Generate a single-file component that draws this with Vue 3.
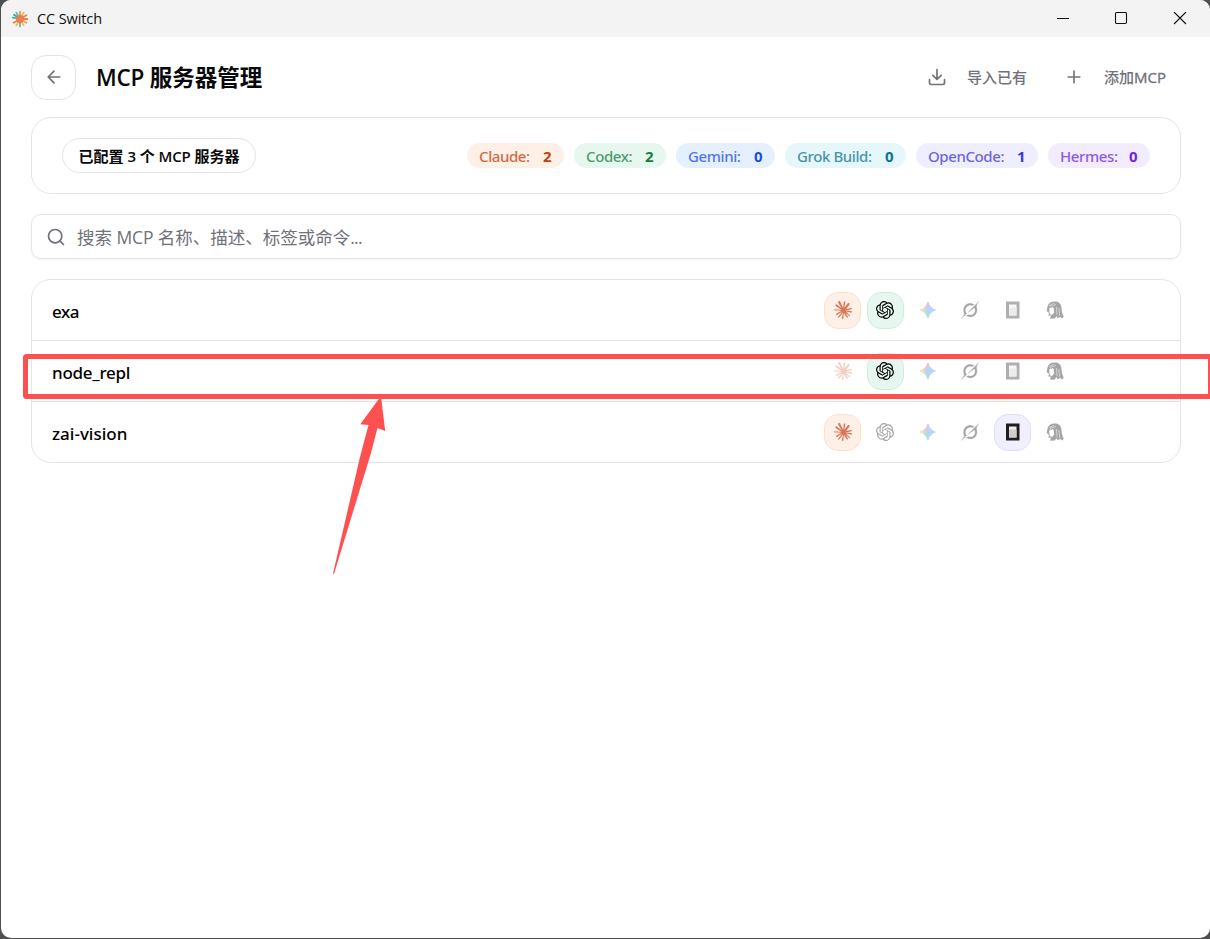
<script setup>
const counts = [
  { id: 'claude', label: 'Claude:', n: 2 },
  { id: 'codex', label: 'Codex:', n: 2 },
  { id: 'gemini', label: 'Gemini:', n: 0 },
  { id: 'grok', label: 'Grok Build:', n: 0 },
  { id: 'opencode', label: 'OpenCode:', n: 1 },
  { id: 'hermes', label: 'Hermes:', n: 0 },
]
const apps = ['claude', 'codex', 'gemini', 'grok', 'opencode', 'hermes']
const servers = [
  { name: 'exa', cls: 'n1', on: ['claude', 'codex'] },
  { name: 'node_repl', cls: 'n2', on: ['codex'] },
  { name: 'zai-vision', cls: 'n3', on: ['claude', 'opencode'] },
]
const rays = [
  ['#4fb3b0', 190], ['#3fa7a5', 215], ['#57b9b4', 240], ['#e8a04c', 270], ['#f0b65a', 300],
  ['#e5824e', 330], ['#e5824e', 0], ['#e9a04c', 30], ['#f0c05a', 60], ['#5fb8b0', 90],
  ['#f0b65a', 120], ['#e5824e', 150],
]
</script>

<template>
  <div class="desktop">
    <div class="window">
      <header class="titlebar">
        <svg class="logo" viewBox="-10 -10 20 20">
          <line v-for="r in rays" :key="r[1]" x1="2" y1="0" x2="7.4" y2="0" :stroke="r[0]" stroke-width="1.8" stroke-linecap="round" :transform="`rotate(${r[1]})`" />
          <circle r="3.9" fill="#e87f4c" />
        </svg>
        <span class="app-name">CC Switch</span>
        <div class="controls">
          <svg viewBox="0 0 14 14"><path d="M1 6.5h12" /></svg>
          <svg viewBox="0 0 14 14"><rect x="1.5" y=".5" width="11" height="11" rx="1.2" /></svg>
          <svg viewBox="0 0 14 14"><path d="M1 0l12 12M13 0L1 12" /></svg>
        </div>
      </header>

      <main class="content">
        <div class="head">
          <button class="back">
            <svg class="line" viewBox="0 0 24 24"><path d="m12 19-7-7 7-7M19 12H5" /></svg>
          </button>
          <h1><span class="lat">MCP</span> 服务器管理</h1>
          <div class="actions">
            <svg class="line" viewBox="0 0 24 24"><path d="M12 15V3M21 15v4a2 2 0 0 1-2 2H5a2 2 0 0 1-2-2v-4M7 10l5 5 5-5" /></svg>
            <span class="act import">导入已有</span>
            <svg class="line" viewBox="0 0 24 24"><path d="M5 12h14M12 5v14" /></svg>
            <span class="act">添加<span class="lat">MCP</span></span>
          </div>
        </div>

        <section class="summary">
          <div class="total">已配置 <span class="lat">3</span> 个 <span class="lat">MCP</span> 服务器</div>
          <div class="badges">
            <div v-for="c in counts" :key="c.id" class="badge" :class="'b-' + c.id">
              <span class="label">{{ c.label }}</span><b>{{ c.n }}</b>
            </div>
          </div>
        </section>

        <div class="search">
          <svg class="line" viewBox="0 0 24 24"><circle cx="11" cy="11" r="8" /><path d="m21 21-4.3-4.3" /></svg>
          <span>搜索 <span class="lat">MCP</span> 名称、描述、标签或命令<span class="dots">...</span></span>
        </div>

        <section class="list">
          <div v-for="s in servers" :key="s.name" class="row">
            <span class="name" :class="s.cls">{{ s.name }}</span>
            <div class="apps">
              <div v-for="a in apps" :key="a" class="app" :class="['a-' + a, { on: s.on.includes(a) }]">
                <svg v-if="a === 'claude'" viewBox="0 0 24 24" fill="#d97757"><path d="M4.709 15.955l4.72-2.647.08-.23-.08-.128H9.2l-.79-.048-2.698-.073-2.339-.097-2.266-.122-.571-.121L0 11.784l.055-.352.48-.321.686.06 1.52.103 2.278.158 1.652.097 2.449.255h.389l.055-.157-.134-.098-.103-.097-2.358-1.596-2.552-1.688-1.336-.972-.724-.491-.364-.462-.158-1.008.656-.722.881.06.225.061.893.686 1.908 1.476 2.491 1.833.365.304.145-.103.019-.073-.164-.274-1.355-2.446-1.446-2.49-.644-1.032-.17-.619a2.97 2.97 0 01-.104-.729L6.283.134 6.696 0l.996.134.42.364.62 1.414 1.002 2.229 1.555 3.03.456.898.243.832.091.255h.158V9.01l.128-1.706.237-2.095.23-2.695.08-.76.376-.91.747-.492.584.28.48.685-.067.444-.286 1.851-.559 2.903-.364 1.942h.212l.243-.242.985-1.306 1.652-2.064.73-.82.85-.904.547-.431h1.033l.76 1.129-.34 1.166-1.064 1.347-.881 1.142-1.264 1.7-.79 1.36.073.11.188-.02 2.856-.606 1.543-.28 1.841-.315.833.388.091.395-.328.807-1.969.486-2.309.462-3.439.813-.042.03.049.061 1.549.146.662.036h1.622l3.02.225.79.522.474.638-.079.485-1.215.62-1.64-.389-3.829-.91-1.312-.329h-.182v.11l1.093 1.068 2.006 1.81 2.509 2.33.127.578-.322.455-.34-.049-2.205-1.657-.851-.747-1.926-1.62h-.128v.17l.444.649 2.345 3.521.122 1.08-.17.353-.608.213-.668-.122-1.374-1.925-1.415-2.167-1.143-1.943-.14.08-.674 7.254-.316.37-.729.28-.607-.461-.322-.747.322-1.476.389-1.924.315-1.53.286-1.9.17-.632-.012-.042-.14.018-1.434 1.967-2.18 2.945-1.726 1.845-.414.164-.717-.37.067-.662.401-.589 2.388-3.036 1.44-1.882.93-1.086-.006-.158h-.055L4.132 18.56l-1.13.146-.487-.456.061-.746.231-.243 1.908-1.312-.006.006z" /></svg>
                <svg v-else-if="a === 'codex'" viewBox="0 0 24 24"><path d="M22.2819 9.8211a5.9847 5.9847 0 0 0-.5157-4.9108 6.0462 6.0462 0 0 0-6.5098-2.9A6.0651 6.0651 0 0 0 4.9807 4.1818a5.9847 5.9847 0 0 0-3.9977 2.9 6.0462 6.0462 0 0 0 .7427 7.0966 5.98 5.98 0 0 0 .511 4.9107 6.051 6.051 0 0 0 6.5146 2.9001A5.9847 5.9847 0 0 0 13.2599 24a6.0557 6.0557 0 0 0 5.7718-4.2058 5.9894 5.9894 0 0 0 3.9977-2.9001 6.0557 6.0557 0 0 0-.7475-7.073zm-9.022 12.6081a4.4755 4.4755 0 0 1-2.8764-1.0408l.1419-.0804 4.7783-2.7582a.7948.7948 0 0 0 .3927-.6813v-6.7369l2.02 1.1686a.071.071 0 0 1 .038.052v5.5826a4.504 4.504 0 0 1-4.4945 4.4944zm-9.6607-4.1254a4.4708 4.4708 0 0 1-.5346-3.0137l.142.0852 4.783 2.7582a.7712.7712 0 0 0 .7806 0l5.8428-3.3685v2.3324a.0804.0804 0 0 1-.0332.0615L9.74 19.9502a4.4992 4.4992 0 0 1-6.1408-1.6464zM2.3408 7.8956a4.485 4.485 0 0 1 2.3655-1.9728V11.6a.7664.7664 0 0 0 .3879.6765l5.8144 3.3543-2.0201 1.1685a.0757.0757 0 0 1-.071 0l-4.8303-2.7865A4.504 4.504 0 0 1 2.3408 7.872zm16.5963 3.8558L13.1038 8.364 15.1192 7.2a.0757.0757 0 0 1 .071 0l4.8303 2.7913a4.4944 4.4944 0 0 1-.6765 8.1042v-5.6772a.79.79 0 0 0-.407-.667zm2.0107-3.0231l-.142-.0852-4.7735-2.7818a.7759.7759 0 0 0-.7854 0L9.409 9.2297V6.8974a.0662.0662 0 0 1 .0284-.0615l4.8303-2.7866a4.4992 4.4992 0 0 1 6.6802 4.66zM8.3065 12.863l-2.02-1.1638a.0804.0804 0 0 1-.038-.0567V6.0742a4.4992 4.4992 0 0 1 7.3757-3.4537l-.142.0805L8.704 5.459a.7948.7948 0 0 0-.3927.6813zm1.0976-2.3654l2.602-1.4998 2.6069 1.4998v2.9994l-2.5974 1.4997-2.6067-1.4997Z" /></svg>
                <svg v-else-if="a === 'gemini'" viewBox="0 0 24 24">
                  <defs>
                    <linearGradient :id="s.cls + 'g1'" x1="7" y1="15.5" x2="11" y2="12" gradientUnits="userSpaceOnUse"><stop stop-color="#08B962" /><stop offset="1" stop-color="#08B962" stop-opacity="0" /></linearGradient>
                    <linearGradient :id="s.cls + 'g2'" x1="8" y1="5.5" x2="11.5" y2="11" gradientUnits="userSpaceOnUse"><stop stop-color="#F94543" /><stop offset="1" stop-color="#F94543" stop-opacity="0" /></linearGradient>
                    <linearGradient :id="s.cls + 'g3'" x1="3.5" y1="13.5" x2="17.5" y2="12" gradientUnits="userSpaceOnUse"><stop stop-color="#FABC12" /><stop offset=".46" stop-color="#FABC12" stop-opacity="0" /></linearGradient>
                  </defs>
                  <path v-for="f in ['#3186FF', `url(#${s.cls}g1)`, `url(#${s.cls}g2)`, `url(#${s.cls}g3)`]" :key="f" :fill="f" d="M20.616 10.835a14.147 14.147 0 01-4.45-3.001 14.111 14.111 0 01-3.678-6.452.503.503 0 00-.975 0 14.134 14.134 0 01-3.679 6.452 14.155 14.155 0 01-4.45 3.001c-.65.28-1.318.505-2.002.678a.502.502 0 000 .975c.684.172 1.35.397 2.002.677a14.147 14.147 0 014.45 3.001 14.112 14.112 0 013.679 6.453.502.502 0 00.975 0c.172-.685.397-1.351.677-2.003a14.145 14.145 0 013.001-4.45 14.113 14.113 0 016.453-3.678.503.503 0 000-.975 13.245 13.245 0 01-2.003-.678z" />
                </svg>
                <svg v-else-if="a === 'grok'" viewBox="0 0 24 24"><path stroke="#000" stroke-width=".4" d="M9.27 15.29l7.978-5.897c.391-.29.95-.177 1.137.272.98 2.369.542 5.215-1.41 7.169-1.951 1.954-4.667 2.382-7.149 1.406l-2.711 1.257c3.889 2.661 8.611 2.003 11.562-.953 2.341-2.344 3.066-5.539 2.388-8.42l.006.007c-.983-4.232.242-5.924 2.75-9.383.06-.082.12-.164.179-.248l-3.301 3.305v-.01L9.267 15.292M7.623 16.723c-2.792-2.67-2.31-6.801.071-9.184 1.761-1.763 4.647-2.483 7.166-1.425l2.705-1.25a7.808 7.808 0 00-1.829-1A8.975 8.975 0 005.984 5.83c-2.533 2.536-3.33 6.436-1.962 9.764 1.022 2.487-.653 4.246-2.34 6.022-.599.63-1.199 1.259-1.682 1.925l7.62-6.815" /></svg>
                <svg v-else-if="a === 'opencode'" viewBox="0 0 18 18"><path fill="#211e1e" d="M2 .5h13.5v17H2z" /><path fill="#fff" fill-opacity=".93" d="M5 3.5h7.5v11H5z" /><path fill="#cfcecd" d="M5 6.5h7.5v8H5z" /></svg>
                <svg v-else viewBox="0 0 18 18">
                  <path d="M1.6 5C2.4 2.6 4.8.5 8.6.5c4 0 6.2 2 6.8 5.4l.3 3.6c.2 2.2 1 4 2 6.2l-1.5 1.8-2-1.4-2.6.8-1.2-2-1.6 2.6-4.8.2.9-2.9-2.6-.3.8-2.4L.7 10z" />
                  <path fill="#fff" d="M3.3 7.4l1.4-1.2.4 1 1.6-1.2.9.9.6 4.6-1.9 2.2-1.5.2-1.4-2.6z" />
                  <path fill="none" stroke="#fff" stroke-width=".5" d="M3 4.8l5-2.6M4 5.5l6-2M10.4 6l.6 8M12.8 7l1 8M3.5 9.2h1.4M6 9.2h1" />
                </svg>
              </div>
            </div>
          </div>
        </section>
      </main>
    </div>

    <svg class="annotation" viewBox="0 0 1210 939">
      <rect x="25.5" y="356.5" width="1185" height="40" rx="1" fill="none" stroke="#fd5150" stroke-width="5" />
      <path d="M381 396L385.2 431L377.5 428L371 453L334 574L333 573.5L360 457L368.5 425L360.3 424.3Z" fill="#fd5150" />
    </svg>
  </div>
</template>

<style>
body { margin: 0; overflow: hidden; }
</style>

<style scoped>
.desktop { position: relative; box-sizing: border-box; width: 1210px; height: 939px; padding: 0 0 1px 1px; background: #505050; font-family: "Open Sans", "Noto Sans CJK SC", sans-serif; color: #09090b; }
.desktop * { box-sizing: border-box; }
.window { height: 938px; border-radius: 10px; background: #fff; overflow: hidden; }
.titlebar { height: 37px; background: #f3f3f3; display: flex; align-items: center; padding-left: 9px; }
.logo { width: 20px; height: 20px; }
.app-name { font-size: 14.5px; letter-spacing: -.1px; margin-left: 7px; color: #111; }
.controls { margin-left: auto; margin-right: 23px; display: flex; }
.controls svg { width: 14px; height: 14px; fill: none; stroke: #111; stroke-width: 1.1; }
.controls svg + svg { margin-left: 44px; }
.controls svg:last-child { margin-left: 45px; }
.content { padding: 18px 29px 0 30px; }
.line { fill: none; stroke: #71717a; stroke-width: 2; stroke-linecap: round; stroke-linejoin: round; width: 20px; height: 20px; flex: none; }
.head { display: flex; align-items: center; height: 45px; }
.back { width: 45px; height: 45px; border: 1px solid #e4e4e7; border-radius: 15px; background: #fff; padding: 0 0 2px; display: grid; place-items: center; }
h1 { margin: 0 0 0 20px; font-size: 22.5px; line-height: 30px; font-weight: 700; white-space: nowrap; }
h1 .lat { font-weight: 600; letter-spacing: -.3px; }
.actions { margin-left: auto; display: flex; align-items: center; margin-right: 15px; padding-bottom: 2px; color: #71717a; font-size: 15px; font-weight: 500; }
.act { margin-left: 20px; line-height: 22px; }
.act .lat { -webkit-text-stroke: .35px currentColor; }
.import { margin-right: 37px; }
.summary { margin-top: 17px; height: 77px; border: 1px solid #e4e4e7; border-radius: 20px; padding: 0 30px; display: flex; align-items: center; justify-content: space-between; }
.total { width: 194px; height: 35px; border: 1px solid #e4e4e7; border-radius: 18px; font-size: 15px; font-weight: 700; line-height: 34px; text-align: center; white-space: nowrap; }
.total .lat { font-weight: 600; letter-spacing: -.2px; }
.badges { display: flex; gap: 10px; }
.badge { height: 25px; border-radius: 13px; padding: 2px 12.5px 0 12px; display: flex; justify-content: space-between; align-items: center; font-size: 15px; font-weight: 500; white-space: nowrap; line-height: 23px; }
.badge .label { opacity: .75; letter-spacing: -.4px; font-family: "Noto Sans", sans-serif; }
.badge b { font-weight: 700; }
.b-claude { width: 97px; background: #fef0e7; color: #c2410c; }
.b-codex { width: 92px; background: #e6f7f0; color: #15803d; }
.b-gemini { width: 99px; background: #e5f0ff; color: #1d4ed8; }
.b-grok { width: 121px; background: #e5f7fb; color: #0e7490; }
.b-opencode { width: 122px; background: #efeefe; color: #4338ca; }
.b-hermes { width: 102px; background: #f2ecfe; color: #6d28d9; }
.search { margin-top: 20px; height: 45px; border: 1px solid #e4e4e7; border-radius: 10px; box-shadow: 0 1px 2px rgba(0,0,0,.05); display: flex; align-items: center; padding-left: 14px; color: #71717a; font-size: 17.5px; line-height: 26px; white-space: nowrap; }
.search > span { margin-left: 11px; }
.search .lat { letter-spacing: -.2px; }
.search .dots { letter-spacing: -.8px; }
.list { margin-top: 20px; border: 1px solid #e4e4e7; border-radius: 20px; height: 184px; }
.row { height: 61px; border-bottom: 1px solid #e4e4e7; display: flex; padding: 0 106.5px 0 20px; align-items: center; justify-content: space-between; }
.row:last-child { height: 60px; border-bottom: 0; }
.name { font-family: "Noto Sans", sans-serif; font-size: 17px; line-height: 26px; font-weight: 500; padding-top: 3px; letter-spacing: -.5px; color: #000; }
.n2 { letter-spacing: -.25px; }
.n3 { letter-spacing: 0; }
.apps { display: flex; gap: 5.5px; }
.app { width: 37px; height: 37px; border: 1px solid transparent; border-radius: 14px; display: grid; place-items: center; }
.app svg { width: 18px; height: 18px; opacity: .35; }
.app.on svg { opacity: 1; }
.a-claude.on { background: #fef0e7; border-color: #fde0cb; }
.a-codex.on { background: #e6f7f0; border-color: #c9efe0; }
.a-opencode.on { background: #efeffe; border-color: #dfdefc; }
.annotation { position: absolute; inset: 0; width: 1210px; height: 939px; pointer-events: none; }
</style>
